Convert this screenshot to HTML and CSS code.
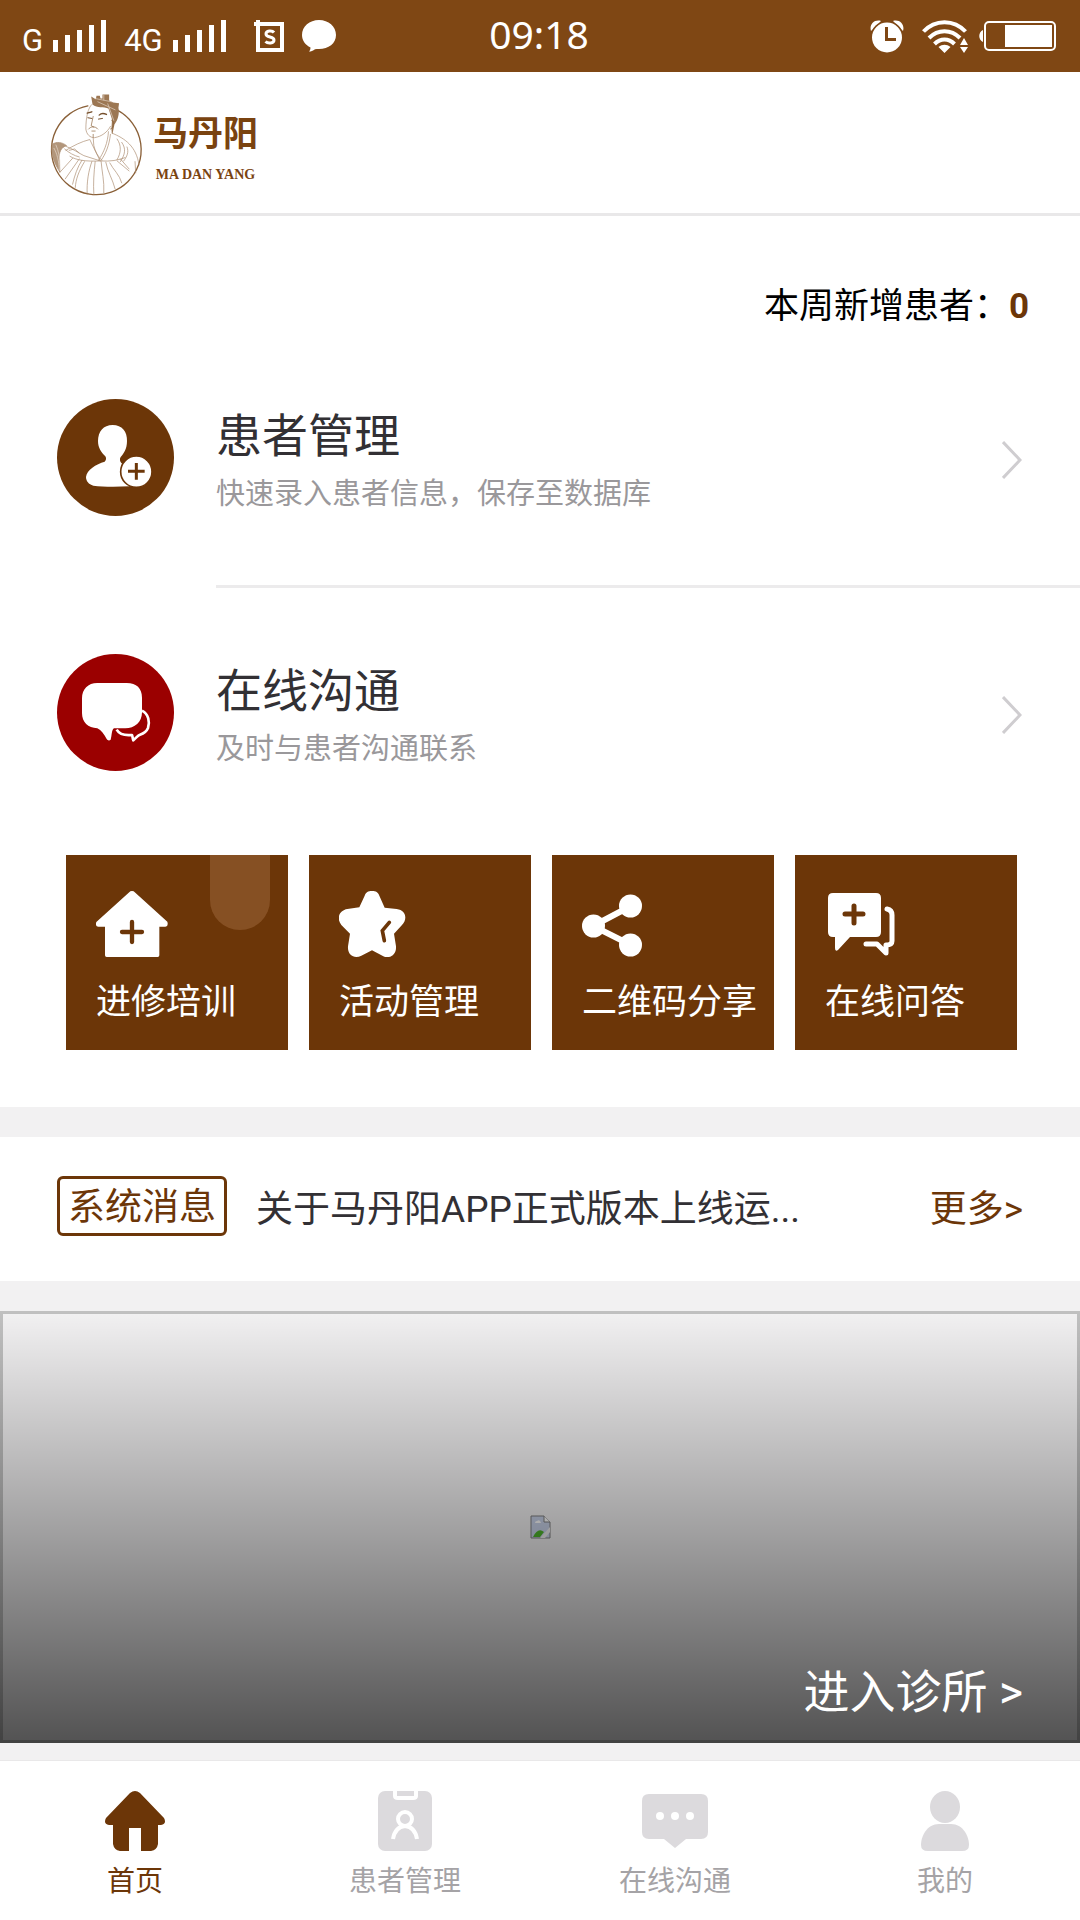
FILE: index.html
```html
<!DOCTYPE html>
<html lang="zh-CN">
<head>
    <meta charset="UTF-8">
    <meta name="viewport" content="width=device-width, initial-scale=1.0">
    <title>马丹阳</title>
    <link rel="stylesheet" href="styles.css">
</head>
<body>
    <div class="status-bar">
        <div class="status-left">
            <span class="network">G</span>
            <svg class="signal" width="53" height="32" viewBox="0 0 53 32" fill="#fff">
                <path d="M0 20h5v12H0zM12 15h5v17h-5zM24 10h5v22h-5zM36 5h5v27h-5zM48 0h5v32h-5z"/>
            </svg>
            <span class="network">4G</span>
            <svg class="signal" width="53" height="32" viewBox="0 0 53 32" fill="#fff">
                <path d="M0 20h5v12H0zM12 15h5v17h-5zM24 10h5v22h-5zM36 5h5v27h-5zM48 0h5v32h-5z"/>
            </svg>
            <svg class="app-icon" width="30" height="32" viewBox="0 0 30 32" fill="none" stroke="#fff">
                <path d="M4 4h24v26H4z" stroke-width="4"/>
                <path d="M0 4h4M4 0v4" stroke-width="4"/>
                <path d="M20 12.500c-2-2.500-8-2-8 1.500 0 4 8 2 8 6 0 3.500-6 4-8.500 1.500" stroke-width="3"/>
            </svg>
            <svg width="34" height="32" viewBox="0 0 34 32" fill="#fff">
                <path d="M17 0c9.500 0 17 6.500 17 15s-7.500 14-17 14c-1.500 0-3 0-4 .2C11 31 9 31.500 7 31.500c1-1 1.500-2.500 1.500-4C3.500 25 0 20.500 0 15 0 6.500 7.500 0 17 0z"/>
            </svg>
        </div>
        <time class="clock">09:18</time>
        <div class="status-right">
            <svg class="alarm" width="34" height="33" viewBox="0 0 34 33">
                <path d="M1 11C-1 5 4-1 11 1zM33 11c2-6-3-12-10-10z" fill="#fff"/>
                <circle cx="17" cy="17.500" r="16.500" fill="#7f4714"/>
                <circle cx="17" cy="17.500" r="15" fill="#fff"/>
                <path d="M16.500 7v12.500H26" fill="none" stroke="#7f4714" stroke-width="3"/>
            </svg>
            <svg width="47" height="33" viewBox="0 0 47 33" fill="none" stroke="#fff" stroke-width="4">
                <path d="M1.500 11.500C13-1 32-1 43.500 11.500M7 18c9-9 22-9 31 0M12.500 24c6-6 14-6 20 0"/>
                <path d="M22.500 33l-6-6c4-3 8-3 12 0zM38 25l4-7 4 7zM38 27h8l-4 6z" fill="#fff" stroke="none"/>
            </svg>
            <svg width="77" height="32" viewBox="0 0 77 32">
                <path d="M4 10v12c-5-2-5-10 0-12zM26 5h47v22H26z" fill="#fff"/>
                <rect x="6" y="2" width="70" height="28" rx="4" fill="none" stroke="#fff" stroke-width="2"/>
            </svg>
        </div>
    </div>

    <header class="header">
        <svg class="portrait" width="93" height="104" viewBox="60 60 280 312" fill="none" stroke="#a98a6c" stroke-width="2" stroke-linecap="round">
            <!-- ring, open behind the head -->
            <path d="M174 98A135 135 0 1 0 264 112" stroke="#8a6038" stroke-width="4"/>
            <!-- crown and hair -->
            <path d="M184 70l14 8 2-10h10l2 8h6V64h20v18l12 6 18 2-2 14c4 18-2 38-12 50l-6 30c-6-16 0-34-2-48l-10-30c-14-6-34 0-48-12z" fill="#9c7753" stroke="none"/>
            <path d="M196 76l50 10M204 86l52 24M222 66v14M234 92l18 50" stroke="#e4d6c8"/>
            <!-- face -->
            <path d="M186 94c-12 10-18 40-18 74 2 16 12 26 26 26 22-4 38-16 48-34"/>
            <path d="M172 120l14-4M208 126c6-6 14-6 22-2" stroke="#76502c" stroke-width="4"/>
            <path d="M174 134l12 2M206 138l12-2" stroke="#76502c" stroke-width="3"/>
            <path d="M190 130l-6 28 8 4M176 168c6-8 20-10 28 0M186 174h10M190 184v8M246 142c8 0 8 24-4 26" stroke="#8a6038"/>
            <!-- robe -->
            <path d="M190 194l2 24c4 18 12 32 24 44M180 200l30 62M236 176c-2 34-14 62-30 86M242 184c-4 34-14 58-28 78M246 180c40 16 74 40 82 96"/>
            <path d="M178 200c-24 6-48 18-70 32M120 250c20 12 46 16 92 14 30 2 54-2 74-10M262 198c14 20 12 42 0 62M276 208c14 20 10 36-4 58M292 222c6 16 0 28-10 42M262 264l36 30M272 258l26 30"/>
            <path d="M156 262c-14 22-22 46-28 72M164 266c-18 30-26 52-28 78M186 266c-10 28-16 62-14 98M196 266c-4 34-6 64-4 100M214 266c2 30 10 58 8 94M228 268c6 30 20 50 28 80M240 270c10 20 30 36 36 60M128 256l-38 42M148 258l-42 60M316 266l2 34"/>
            <!-- whisk and hands -->
            <path d="M66 214c14-10 32-6 44 4-16 4-24 20-22 42l2 38c-16-24-28-54-24-84z" fill="#b2967b"/>
            <path d="M72 226c8 12 16 40 16 66M78 216c8 18 12 40 12 60" stroke="#e8dcd0"/>
            <path d="M108 220c18 6 38 20 54 28l50 16M104 228c14 12 28 20 44 24M118 232l16-4 14 12"/>
        </svg>
        <div class="brand">
            <h1>马丹阳</h1>
            <p>MA DAN YANG</p>
        </div>
    </header>

    <main>
        <p class="weekly">本周新增患者：<b>0</b></p>

        <nav class="entries">
            <a class="entry" href="#patients">
                <svg class="entry-icon" width="117" height="117" viewBox="51 57 351 351">
                    <circle cx="226.500" cy="232.500" r="175.500" fill="#6c3608"/>
                    <path d="M218 135c28 0 44 20 43 48 0 24-10 38-19 48-4 6-2 14 2 18 10 10 30 10 34 40l-10 30c-40 2-80 2-108-2-14-4-22-14-22-26 2-22 30-38 56-46 4-4 6-10 2-16-12-12-22-26-22-46 0-28 16-48 44-48z" fill="#fff"/>
                    <circle cx="289" cy="275" r="47" fill="#fff" stroke="#6c3608" stroke-width="5"/>
                    <path d="M289 249v50M264 274h50" stroke="#6c3608" stroke-width="9"/>
                </svg>
                <div class="entry-body">
                    <div>
                        <h2>患者管理</h2>
                        <p>快速录入患者信息，保存至数据库</p>
                    </div>
                    <svg width="20" height="38" viewBox="0 0 20 38" fill="none" stroke="#cfcdd0" stroke-width="3">
                        <path d="M1 1l17 18L1 37"/>
                    </svg>
                </div>
            </a>
            <a class="entry" href="#chat">
                <svg class="entry-icon" width="117" height="117" viewBox="51 42 351 351">
                    <circle cx="226.500" cy="217.500" r="175.500" fill="#9b0000"/>
                    <path d="M306 212c20 10 24 34 18 52-4 10-12 16-24 20-6 2-10 8-20 17-2-4-2-12-4-16-20 2-38-2-46-16" fill="none" stroke="#fff" stroke-width="8" stroke-linejoin="round"/>
                    <path d="M172 129h88c30 0 46 16 46 44v44c0 30-22 48-50 48h-34c-8 6-6 20-10 34-4 4-10 2-12-2-8-14-16-26-28-32-28-2-46-18-46-46v-44c0-28 18-46 46-46z" fill="#fff"/>
                </svg>
                <div class="entry-body">
                    <div>
                        <h2>在线沟通</h2>
                        <p>及时与患者沟通联系</p>
                    </div>
                    <svg width="20" height="38" viewBox="0 0 20 38" fill="none" stroke="#cfcdd0" stroke-width="3">
                        <path d="M1 1l17 18L1 37"/>
                    </svg>
                </div>
            </a>
        </nav>

        <nav class="tiles">
            <a class="tile ribbon" href="#training">
                <svg width="72" height="66" viewBox="138 153 216 198">
                    <path d="M241 154q5-2 10 0l101 91q4 14-6 15h-18v86q0 5-5 5H170q-5 0-5-5v-86h-20q-10 0-6-14z" fill="#fff"/>
                    <path d="M246 246v60M216 276h60" stroke="#6c3608" stroke-width="13" stroke-linecap="round"/>
                </svg>
                <span>进修培训</span>
            </a>
            <a class="tile" href="#events">
                <svg width="72" height="66" viewBox="867 153 216 198">
                    <path d="M966 153c12 0 18 4 22 14l16 36 36 4c30 4 32 32 16 48l-24 26 6 38c2 26-20 38-38 30l-34-18-32 16c-20 10-42 0-40-28l6-38-26-26c-16-20-6-44 18-48l36-5 16-35c4-10 10-14 22-14z" fill="#fff"/>
                    <path d="M1018 247l-21 25 6 30" fill="none" stroke="#6c3608" stroke-width="11" stroke-linecap="round"/>
                </svg>
                <span>活动管理</span>
            </a>
            <a class="tile" href="#share">
                <svg width="72" height="66" viewBox="0 0 72 66" fill="#fff">
                    <path d="M49 15L11 35l38 19" fill="none" stroke="#fff" stroke-width="6"/>
                    <circle cx="11.500" cy="35" r="11.500"/>
                    <circle cx="48.500" cy="15" r="11.500"/>
                    <circle cx="48.500" cy="54" r="11.500"/>
                </svg>
                <span>二维码分享</span>
            </a>
            <a class="tile" href="#answers">
                <svg width="72" height="66" viewBox="0 0 72 66" fill="none" stroke-linecap="round" stroke-linejoin="round">
                    <path d="M8 2h43q5 0 5 5v34q0 5-5 5H25L13 59q-3 2-3-2V46H8q-5 0-5-5V7q0-5 5-5z" fill="#fff"/>
                    <path d="M29 15v17M20 23h18" stroke="#6c3608" stroke-width="5"/>
                    <path d="M62 18q5 1 5 6v26q0 4-6 4v8l-9-9H41" stroke="#fff" stroke-width="5"/>
                </svg>
                <span>在线问答</span>
            </a>
        </nav>

        <section class="notice">
            <span class="notice-tag">系统消息</span>
            <a class="notice-title" href="#notice">关于马丹阳APP正式版本上线运...</a>
            <a class="notice-more" href="#notices">更多&gt;</a>
        </section>

        <a class="clinic" href="#clinic">
            <svg class="broken-image" width="21" height="24" viewBox="0 0 21 24">
                <path d="M1 1h13l6 6v16H1z" fill="#c9d3ea" stroke="#808080" stroke-width="1"/>
                <path d="M14 1v6h6" fill="#fff" stroke="#808080"/>
                <path d="M5 8q0-2 2-2 3-2 4 2z" fill="#fff"/>
                <path d="M3 22q5-10 11-5l-4 5z" fill="#4fb52c"/>
                <path d="M10 23L20 12v5l-5 6z" fill="#eee"/>
            </svg>
            <span class="clinic-link">进入诊所 &gt;</span>
        </a>
    </main>

    <nav class="tab-bar">
        <a class="tab active" href="#home">
            <svg width="60" height="60" viewBox="0 0 60 60" fill="#6c3608">
                <path d="M25 2q5-4 10 0l24 25q3 6-3 7h-3v19q-1 6-7 7H36V37H24v23H15q-6-1-7-7V34H4q-6-1-3-7z"/>
            </svg>
            <span>首页</span>
        </a>
        <a class="tab" href="#patients">
            <svg width="54" height="60" viewBox="0 0 54 60" fill="none" stroke="#fff" stroke-width="4">
                <rect width="54" height="60" rx="7" fill="#dcdadd" stroke="none"/>
                <path d="M17 0v5q0 2 3 2h15q3 0 3-2V0"/>
                <circle cx="27" cy="28" r="7"/>
                <path d="M15 48q2-12 12-13 10 1 12 13"/>
            </svg>
            <span>患者管理</span>
        </a>
        <a class="tab" href="#chat">
            <svg width="66" height="60" viewBox="0 0 66 60" fill="#fff">
                <path d="M7 3h52q7 0 7 7v31q0 7-7 7H44L33 57 22 48H7q-7 0-7-7V10q0-7 7-7z" fill="#dcdadd"/>
                <circle cx="18" cy="25" r="4"/>
                <circle cx="33" cy="25" r="4"/>
                <circle cx="48" cy="25" r="4"/>
            </svg>
            <span>在线沟通</span>
        </a>
        <a class="tab" href="#me">
            <svg width="48" height="60" viewBox="0 0 48 60" fill="#dcdadd">
                <ellipse cx="24" cy="16" rx="15" ry="16"/>
                <path d="M18 33h12c12 0 18 12 18 21q0 6-7 6H7q-7 0-7-6c0-9 6-21 18-21z"/>
            </svg>
            <span>我的</span>
        </a>
    </nav>
</body>
</html>
```
FILE: styles.css
```css
* {
    margin: 0;
    padding: 0;
    box-sizing: border-box;
}

body {
    display: flex;
    flex-direction: column;
    min-height: 100vh;
    font-family: Roboto, "Noto Sans CJK SC", sans-serif;
    background: #f2f1f2;
    color: #323034;
}

a {
    color: inherit;
    text-decoration: none;
}

svg {
    display: block;
    flex-shrink: 0;
}

.status-bar {
    display: grid;
    grid-template-columns: 1fr auto 1fr;
    align-items: center;
    height: 72px;
    padding: 0 24px 0 22px;
    background: #7f4714;
    color: white;
}

.status-left, .status-right {
    display: flex;
    align-items: center;
}

.status-right {
    justify-content: flex-end;
    gap: 10px;
}

.alarm {
    margin-right: 8px;
}

.network {
    font-size: 31px;
    line-height: 36px;
    padding-top: 10px;
}

.signal {
    margin: 0 18px 0 10px;
}

.app-icon {
    margin: 0 18px 0 10px;
}

.clock {
    font-family: "Noto Sans", sans-serif;
    font-size: 39px;
    line-height: 68px;
    padding-bottom: 4px;
}

.header {
    display: flex;
    align-items: center;
    gap: 10px;
    height: 144px;
    padding: 4px 50px 0;
    background: white;
    border-bottom: 3px solid #e9e8e9;
}

.brand {
    color: #7a4310;
    text-align: center;
}

.brand h1 {
    font-size: 35px;
    line-height: 60px;
    font-weight: bold;
}

.brand p {
    font-family: "Liberation Serif", serif;
    font-size: 14px;
    line-height: 20px;
    font-weight: bold;
}

.weekly {
    padding: 66px 51px 1px;
    background: white;
    color: black;
    font-size: 35px;
    line-height: 50px;
    text-align: right;
}

.weekly b {
    color: #6c3608;
}

.entries {
    background: white;
}

.entry {
    display: flex;
    padding-left: 57px;
}

.entry-icon {
    margin-top: 66px;
}

.entry-body {
    flex: 1;
    display: flex;
    align-items: center;
    justify-content: space-between;
    margin-left: 42px;
    padding: 73px 58px 71px 0;
}

.entry:first-child .entry-body {
    border-bottom: 3px solid #ecebec;
}

.entry h2 {
    font-size: 46px;
    line-height: 60px;
    font-weight: normal;
}

.entry p {
    margin-top: 8px;
    color: #9a989b;
    font-size: 29px;
    line-height: 40px;
}

.tiles {
    display: grid;
    grid-template-columns: repeat(4, 1fr);
    gap: 21px;
    padding: 15px 63px 57px 66px;
    background: white;
}

.tile {
    position: relative;
    padding: 36px 0 23px 30px;
    background: #6c3608;
    color: white;
    font-size: 35px;
    line-height: 48px;
    white-space: nowrap;
}

.tile span {
    display: block;
    margin-top: 22px;
}

.ribbon::after {
    content: "";
    position: absolute;
    top: 0;
    right: 18px;
    width: 60px;
    height: 75px;
    background: rgba(255, 200, 160, 0.18);
    border-radius: 0 0 30px 30px;
}

.notice {
    display: flex;
    align-items: center;
    height: 144px;
    margin: 30px 0;
    padding: 0 57px 6px;
    background: white;
    font-size: 37px;
}

.notice-tag {
    padding: 4px 8px 0;
    border: 3px solid #6c3608;
    border-radius: 6px;
    color: #6c3608;
    line-height: 50px;
}

.notice-title {
    flex: 1;
    margin-left: 29px;
}

.notice-more {
    color: #6c3608;
}

.clinic {
    position: relative;
    display: flex;
    align-items: center;
    justify-content: center;
    height: 432px;
    border: 3px solid silver;
}

/* darkens the picture and its frame towards the bottom */
.clinic::after {
    content: "";
    position: absolute;
    inset: -3px;
    background: linear-gradient(rgba(0, 0, 0, 0), rgba(0, 0, 0, 0.66));
}

.clinic-link {
    position: absolute;
    right: 54px;
    bottom: 18px;
    z-index: 1;
    color: white;
    font-size: 46px;
    line-height: 60px;
}

.tab-bar {
    display: grid;
    grid-template-columns: repeat(4, 1fr);
    margin-top: auto;
    background: white;
    border-top: 1px solid #e9e8e9;
}

.tab {
    display: flex;
    flex-direction: column;
    align-items: center;
    gap: 11px;
    padding: 30px 0 18px;
    color: #a5a3a6;
    font-size: 28px;
    line-height: 40px;
}

.tab.active {
    color: #6c3608;
}
```
